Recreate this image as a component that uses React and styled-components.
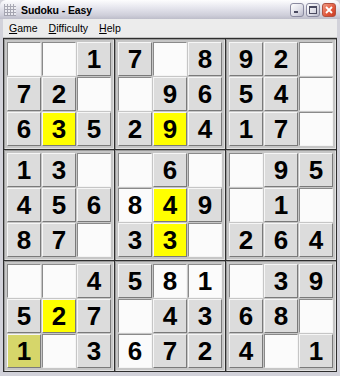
import styled, { createGlobalStyle } from "styled-components";

const Global = createGlobalStyle`
  html, body { margin: 0; padding: 0; background: #ffffff; }
  body { font-family: "Liberation Sans", Arial, sans-serif; }
`;

const Window = styled.div`
  width: 340px;
  height: 376px;
  box-sizing: border-box;
  background: #d2d2da;
  display: flex;
  flex-direction: column;
  overflow: hidden;
`;

const TitleBar = styled.div`
  height: 19px;
  flex: none;
  display: flex;
  align-items: center;
  padding: 0 4px 0 4px;
  gap: 5px;
  background: linear-gradient(#fdfdfe 0%, #e6e6ee 40%, #cfcfda 80%, #bdbdc9 100%);
  border-radius: 6px 6px 0 0;
`;

const AppIcon = styled.div`
  width: 12px;
  height: 12px;
  background:
    repeating-linear-gradient(90deg, #9a9aa6 0 1px, transparent 1px 3px),
    repeating-linear-gradient(0deg, #9a9aa6 0 1px, transparent 1px 3px),
    #f0f0f4;
  opacity: 0.8;
`;

const Title = styled.span`
  flex: 1;
  font-family: "Liberation Sans", Arial, sans-serif;
  font-weight: bold;
  font-size: 10.5px;
  color: #000000;
  letter-spacing: -0.1px;
`;

const Controls = styled.div`
  display: flex;
  gap: 2px;
  margin-top: 1px;
`;

const CtlButton = styled.div`
  width: 14px;
  height: 14px;
  box-sizing: border-box;
  border: 1px solid ${(p) => (p.$close ? "#b05040" : "#8a8aa0")};
  border-radius: 3px;
  background: ${(p) =>
    p.$close
      ? "linear-gradient(135deg, #f09a84, #e0563a 60%, #c83c24)"
      : "linear-gradient(135deg, #ffffff, #dcdce6 60%, #b8b8c8)"};
  display: flex;
  align-items: center;
  justify-content: center;
`;

const Body = styled.div`
  flex: 1;
  display: flex;
  flex-direction: column;
  padding: 0 3px 4px 3px;
`;

const MenuBar = styled.div`
  height: 19px;
  flex: none;
  display: flex;
  align-items: center;
  gap: 11px;
  background: #ececec;
  box-sizing: border-box;
  border-bottom: 1px solid #c4c4c4;
  padding-left: 6px;
`;

const MenuItem = styled.span`
  font-family: "Liberation Sans", Arial, sans-serif;
  font-size: 10.5px;
  color: #000;
  u { text-decoration: underline; }
`;

const Board = styled.div`
  display: grid;
  grid-template-columns: repeat(3, 110px);
  grid-template-rows: repeat(3, 110px);
  gap: 1px;
  padding: 1px;
  background: #2e2e2e;
  width: 334px;
  box-sizing: border-box;
`;

const Box = styled.div`
  background: #c6c6c6;
  padding: 3px;
  display: grid;
  grid-template-columns: repeat(3, 34px);
  grid-template-rows: repeat(3, 34px);
  gap: 1px;
  box-shadow: inset 1px 1px 0 #9a9a9a, inset -1px -1px 0 #e2e2e2;
`;

const bg = {
  given: "#dcdcdc",
  empty: "#fbfbfb",
  yellow: "#ffff00",
  sel: "#d6d66a",
};

const Cell = styled.div`
  box-sizing: border-box;
  background: ${(p) => bg[p.$kind]};
  display: flex;
  align-items: center;
  justify-content: center;
  font-family: "Liberation Sans", Arial, sans-serif;
  font-weight: bold;
  font-size: 26px;
  color: #000;
  border-style: solid;
  border-width: 1px;
  border-color: ${(p) =>
    p.$kind === "empty"
      ? "#8a8a8a #f4f4f4 #f4f4f4 #8a8a8a"
      : "#f6f6f6 #7a7a7a #7a7a7a #f6f6f6"};
  padding-top: 1px;
`;

// g = given (gray), e = white, y = yellow, s = selected
const rows = [
  "..1|7.8|92.",
  "72.|.96|54.",
  "635|294|17.",
  "13.|.6.|.95",
  "456|849|.1.",
  "87.|33.|264",
  "..4|581|.39",
  "527|.43|68.",
  "1.3|672|4.1",
];

const kinds = [
  "eeg|geg|gge",
  "gge|egg|gge",
  "gyg|gyg|gge",
  "gge|ege|egg",
  "ggg|eyg|ege",
  "gge|gye|ggg",
  "eeg|gee|egg",
  "gyg|egg|gge",
  "seg|egg|geg",
];

const kindName = { g: "given", e: "empty", y: "yellow", s: "sel" };

function cellAt(r, c) {
  const rs = rows[r].replace(/\|/g, "");
  const ks = kinds[r].replace(/\|/g, "");
  const v = rs[c] === "." ? "" : rs[c];
  return { v, kind: kindName[ks[c]] };
}

export default function App() {
  const boxes = [];
  for (let b = 0; b < 9; b++) {
    const br = Math.floor(b / 3) * 3;
    const bc = (b % 3) * 3;
    const cells = [];
    for (let i = 0; i < 9; i++) {
      const r = br + Math.floor(i / 3);
      const c = bc + (i % 3);
      const { v, kind } = cellAt(r, c);
      cells.push(
        <Cell key={i} $kind={kind}>
          {v}
        </Cell>
      );
    }
    boxes.push(<Box key={b}>{cells}</Box>);
  }

  return (
    <>
      <Global />
      <Window>
        <TitleBar>
          <AppIcon />
          <Title>Sudoku - Easy</Title>
          <Controls>
            <CtlButton>
              <svg width="8" height="8" viewBox="0 0 8 8">
                <rect x="1" y="5" width="4" height="2" fill="#4a4a60" />
              </svg>
            </CtlButton>
            <CtlButton>
              <svg width="8" height="8" viewBox="0 0 8 8">
                <rect x="0.5" y="0.5" width="7" height="7" fill="none" stroke="#4a4a60" />
                <rect x="0.5" y="0.5" width="7" height="1.5" fill="#4a4a60" />
              </svg>
            </CtlButton>
            <CtlButton $close>
              <svg width="8" height="8" viewBox="0 0 8 8">
                <path d="M1 1L7 7M7 1L1 7" stroke="#ffffff" strokeWidth="1.8" />
              </svg>
            </CtlButton>
          </Controls>
        </TitleBar>
        <Body>
          <MenuBar>
            <MenuItem>
              <u>G</u>ame
            </MenuItem>
            <MenuItem>
              <u>D</u>ifficulty
            </MenuItem>
            <MenuItem>
              <u>H</u>elp
            </MenuItem>
          </MenuBar>
          <Board>{boxes}</Board>
        </Body>
      </Window>
    </>
  );
}
